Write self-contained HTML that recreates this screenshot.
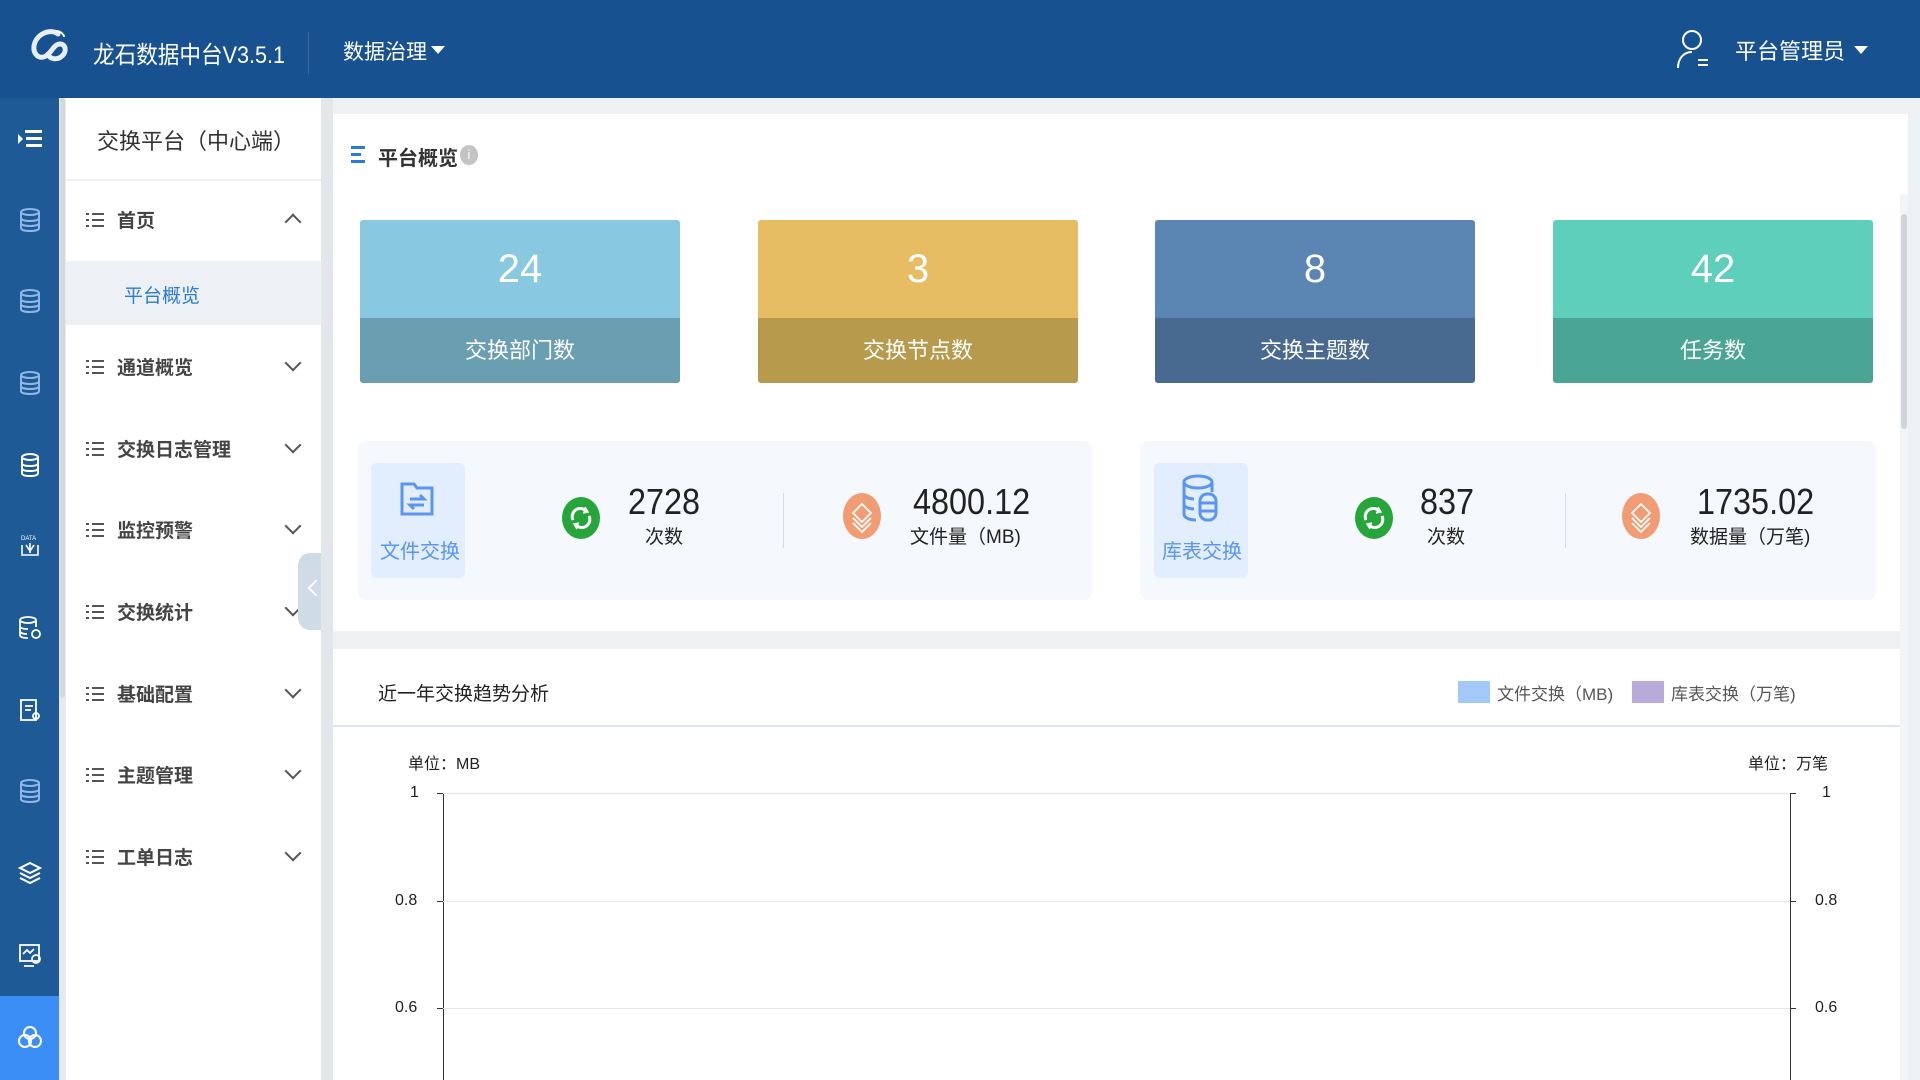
<!DOCTYPE html>
<html><head><meta charset="utf-8"><style>
*{margin:0;padding:0;box-sizing:border-box}
body{width:1920px;height:1080px;overflow:hidden;background:#eef1f4;font-family:"Liberation Sans","Noto Sans CJK SC",sans-serif;position:relative;color:#333}
.abs{position:absolute}
.hdr{left:0;top:0;width:1920px;height:98px;background:#175190;color:#fff}
.bar{left:0;top:98px;width:59px;height:982px;background:#1e5a96}
.bar .ic{position:absolute;left:17px;width:26px;height:26px}
.menu{left:66px;top:98px;width:255px;height:982px;background:#fff}
.mi{position:absolute;left:0;width:255px;height:60px;font-size:19px;color:#444;font-weight:bold}
.mi .l{position:absolute;left:20px;top:22px;width:18px;height:16px}
.mi .t{position:absolute;left:51px;top:16px}
.mi .c{position:absolute;right:22px;top:20px;width:12px;height:12px;border-right:2px solid #555;border-bottom:2px solid #555;transform:rotate(45deg)}
.card{top:220px;width:320px;height:163px;border-radius:3px;overflow:hidden;color:#fff;text-align:center}
.card .n{height:98px;font-size:40px;line-height:98px}
.card .b{height:65px;font-size:22px;line-height:65px}
.box{top:441px;height:159px;background:#f5f8fc;border-radius:8px}
.num{font-size:36px;color:#222;line-height:40px;transform:scaleX(.9);transform-origin:left}
.sub{font-size:19px;color:#222}
</style></head><body>
<div class="abs hdr">
 <svg class="abs" style="left:28px;top:28px" width="44" height="42" viewBox="0 0 44 42"><path d="M30 6c-8-6-22 0-24 12-1 8 5 14 12 10 6-4 8-12 14-12 6 0 7 8 2 12-4 4-12 4-14-2" fill="none" stroke="#e8eef5" stroke-width="5" stroke-linecap="round"/><path d="M28 3c4 0 8 3 8 6" fill="none" stroke="#fff" stroke-width="2"/></svg>
 <div class="abs" style="left:93px;top:35px;font-size:24px;transform:scaleX(.9);transform-origin:left">龙石数据中台V3.5.1</div>
 <div class="abs" style="left:308px;top:32px;width:1px;height:42px;background:#3b6aa3"></div>
 <div class="abs" style="left:343px;top:36px;font-size:21px">数据治理</div>
 <div class="abs" style="left:431px;top:46px;border-left:7px solid transparent;border-right:7px solid transparent;border-top:8px solid #fff"></div>
 <svg class="abs" style="left:1676px;top:28px" width="34" height="42" viewBox="0 0 34 42" fill="none" stroke="#fff" stroke-width="2"><circle cx="16" cy="12" r="9"/><path d="M2 40c0-10 6-16 14-16"/><path d="M22 32h10M22 37h10"/></svg>
 <div class="abs" style="left:1735px;top:34px;font-size:22px">平台管理员</div>
 <div class="abs" style="left:1854px;top:46px;border-left:7px solid transparent;border-right:7px solid transparent;border-top:8px solid #fff"></div>
</div>
<div class="abs bar">
 <svg class="ic" style="top:28px" viewBox="0 0 26 26" fill="#fff"><path d="M1 8l5 5-5 5z"/><rect x="8" y="4" width="17" height="3"/><rect x="9" y="11" width="16" height="3"/><rect x="9" y="18" width="16" height="3"/></svg>
 <svg class="ic" style="top:109px" viewBox="0 0 26 26" fill="none" stroke="#8fb6e6" stroke-width="2"><ellipse cx="13" cy="5" rx="9" ry="3"/><path d="M4 5v16c0 2 4 3 9 3s9-1 9-3V5M4 11c0 2 4 3 9 3s9-1 9-3M4 16c0 2 4 3 9 3s9-1 9-3"/></svg>
 <svg class="ic" style="top:190px" viewBox="0 0 26 26" fill="none" stroke="#8fb6e6" stroke-width="2"><ellipse cx="13" cy="5" rx="9" ry="3"/><path d="M4 5v16c0 2 4 3 9 3s9-1 9-3V5M4 11c0 2 4 3 9 3s9-1 9-3M4 16c0 2 4 3 9 3s9-1 9-3"/></svg>
 <svg class="ic" style="top:272px" viewBox="0 0 26 26" fill="none" stroke="#8fb6e6" stroke-width="2"><ellipse cx="13" cy="5" rx="9" ry="3"/><path d="M4 5v16c0 2 4 3 9 3s9-1 9-3V5M4 11c0 2 4 3 9 3s9-1 9-3M4 16c0 2 4 3 9 3s9-1 9-3"/></svg>
 <svg class="ic" style="top:354px" viewBox="0 0 26 26" fill="none" stroke="#fff" stroke-width="2"><ellipse cx="13" cy="5" rx="8" ry="3"/><path d="M5 5v16c0 2 3 3 8 3s8-1 8-3V5M5 11c0 2 3 3 8 3s8-1 8-3M5 16c0 2 3 3 8 3s8-1 8-3"/></svg>
 <svg class="ic" style="top:435px" viewBox="0 0 26 26" fill="none" stroke="#fff" stroke-width="1.6"><path d="M5 12v10h16V12M9 12l4 6 4-6M13 10v10"/><text x="4" y="7" font-size="6" fill="#fff" stroke="none">DATA</text></svg>
 <svg class="ic" style="top:517px" viewBox="0 0 26 26" fill="none" stroke="#fff" stroke-width="1.8"><ellipse cx="11" cy="5" rx="8" ry="3"/><path d="M3 5v15c0 2 3 3 8 3M19 5v7M3 11c0 2 3 3 8 3M3 16c0 2 3 3 7 3"/><circle cx="19" cy="19" r="4"/></svg>
 <svg class="ic" style="top:599px" viewBox="0 0 26 26" fill="none" stroke="#fff" stroke-width="1.8"><rect x="4" y="3" width="15" height="20"/><path d="M8 9h8M8 13h6"/><circle cx="19" cy="19" r="3"/></svg>
 <svg class="ic" style="top:680px" viewBox="0 0 26 26" fill="none" stroke="#8fb6e6" stroke-width="2"><ellipse cx="13" cy="5" rx="9" ry="3"/><path d="M4 5v16c0 2 4 3 9 3s9-1 9-3V5M4 11c0 2 4 3 9 3s9-1 9-3M4 16c0 2 4 3 9 3s9-1 9-3"/></svg>
 <svg class="ic" style="top:762px" viewBox="0 0 26 26" fill="none" stroke="#fff" stroke-width="2"><path d="M13 3l10 5-10 5-10-5z"/><path d="M3 13l10 5 10-5M3 18l10 5 10-5"/></svg>
 <svg class="ic" style="top:844px" viewBox="0 0 26 26" fill="none" stroke="#fff" stroke-width="1.8"><rect x="3" y="3" width="19" height="16"/><path d="M7 24h10M6 12l4-4 3 3 4-4"/><circle cx="19" cy="17" r="4"/></svg>
 <div class="abs" style="left:0;top:898px;width:59px;height:84px;background:#3a8ef5"></div>
 <svg class="ic" style="top:926px" viewBox="0 0 26 26" fill="none" stroke="#fff" stroke-width="2"><circle cx="13" cy="9" r="6"/><circle cx="8" cy="17" r="6"/><circle cx="18" cy="17" r="6"/></svg>
</div>
<div class="abs" style="left:59px;top:98px;width:7px;height:982px;background:#e6e9ed"></div>
<div class="abs" style="left:60px;top:98px;width:5px;height:600px;background:#d5d9de;border-radius:3px"></div>
<div class="abs menu">
 <div class="abs" style="left:31px;top:26px;font-size:22px;color:#333">交换平台（中心端）</div>
 <div class="abs" style="left:0;top:81px;width:255px;height:2px;background:#eef0f2"></div>
 <div class="mi" style="top:92px"><svg class="l" viewBox="0 0 18 16" fill="#555"><rect x="0" y="1" width="3" height="2"/><rect x="0" y="7" width="3" height="2"/><rect x="0" y="13" width="3" height="2"/><rect x="6" y="1" width="12" height="2"/><rect x="6" y="7" width="12" height="2"/><rect x="6" y="13" width="12" height="2"/></svg><span class="t">首页</span><div class="c" style="transform:rotate(225deg);top:26px"></div></div>
 <div class="abs" style="left:0;top:163px;width:255px;height:64px;background:#edf1f5"></div>
 <div class="abs" style="left:58px;top:183px;font-size:19px;color:#2a7ad8">平台概览</div>
 <div class="mi" style="top:239px"><svg class="l" viewBox="0 0 18 16" fill="#555"><rect x="0" y="1" width="3" height="2"/><rect x="0" y="7" width="3" height="2"/><rect x="0" y="13" width="3" height="2"/><rect x="6" y="1" width="12" height="2"/><rect x="6" y="7" width="12" height="2"/><rect x="6" y="13" width="12" height="2"/></svg><span class="t">通道概览</span><div class="c"></div></div>
 <div class="mi" style="top:321px"><svg class="l" viewBox="0 0 18 16" fill="#555"><rect x="0" y="1" width="3" height="2"/><rect x="0" y="7" width="3" height="2"/><rect x="0" y="13" width="3" height="2"/><rect x="6" y="1" width="12" height="2"/><rect x="6" y="7" width="12" height="2"/><rect x="6" y="13" width="12" height="2"/></svg><span class="t">交换日志管理</span><div class="c"></div></div>
 <div class="mi" style="top:402px"><svg class="l" viewBox="0 0 18 16" fill="#555"><rect x="0" y="1" width="3" height="2"/><rect x="0" y="7" width="3" height="2"/><rect x="0" y="13" width="3" height="2"/><rect x="6" y="1" width="12" height="2"/><rect x="6" y="7" width="12" height="2"/><rect x="6" y="13" width="12" height="2"/></svg><span class="t">监控预警</span><div class="c"></div></div>
 <div class="mi" style="top:484px"><svg class="l" viewBox="0 0 18 16" fill="#555"><rect x="0" y="1" width="3" height="2"/><rect x="0" y="7" width="3" height="2"/><rect x="0" y="13" width="3" height="2"/><rect x="6" y="1" width="12" height="2"/><rect x="6" y="7" width="12" height="2"/><rect x="6" y="13" width="12" height="2"/></svg><span class="t">交换统计</span><div class="c"></div></div>
 <div class="mi" style="top:566px"><svg class="l" viewBox="0 0 18 16" fill="#555"><rect x="0" y="1" width="3" height="2"/><rect x="0" y="7" width="3" height="2"/><rect x="0" y="13" width="3" height="2"/><rect x="6" y="1" width="12" height="2"/><rect x="6" y="7" width="12" height="2"/><rect x="6" y="13" width="12" height="2"/></svg><span class="t">基础配置</span><div class="c"></div></div>
 <div class="mi" style="top:647px"><svg class="l" viewBox="0 0 18 16" fill="#555"><rect x="0" y="1" width="3" height="2"/><rect x="0" y="7" width="3" height="2"/><rect x="0" y="13" width="3" height="2"/><rect x="6" y="1" width="12" height="2"/><rect x="6" y="7" width="12" height="2"/><rect x="6" y="13" width="12" height="2"/></svg><span class="t">主题管理</span><div class="c"></div></div>
 <div class="mi" style="top:729px"><svg class="l" viewBox="0 0 18 16" fill="#555"><rect x="0" y="1" width="3" height="2"/><rect x="0" y="7" width="3" height="2"/><rect x="0" y="13" width="3" height="2"/><rect x="6" y="1" width="12" height="2"/><rect x="6" y="7" width="12" height="2"/><rect x="6" y="13" width="12" height="2"/></svg><span class="t">工单日志</span><div class="c"></div></div>
 <div class="abs" style="left:232px;top:455px;width:23px;height:77px;background:#cfdbe6;border-radius:12px 0 0 12px"></div>
 <div class="abs" style="left:244px;top:484px;width:12px;height:12px;border-left:2px solid #fff;border-bottom:2px solid #fff;transform:rotate(45deg)"></div>
</div>
<div class="abs" style="left:321px;top:98px;width:12px;height:982px;background:#e3e7eb"></div>
<div class="abs" style="left:333px;top:114px;width:1575px;height:80px;background:#fff"></div>
<svg class="abs" style="left:351px;top:146px" width="16" height="18"><rect x="0" y="0" width="14" height="3" fill="#2a7ad8"/><rect x="0" y="7" width="10" height="3" fill="#2a7ad8"/><rect x="0" y="14" width="14" height="3" fill="#2a7ad8"/></svg>
<div class="abs" style="left:378px;top:142px;font-size:20px;color:#333;font-weight:bold">平台概览</div>
<div class="abs" style="left:460px;top:145px;width:18px;height:20px;border-radius:50%;background:#c4c4c4;color:#fff;font-size:13px;text-align:center;line-height:20px">i</div>
<div class="abs" style="left:333px;top:194px;width:1575px;height:437px;background:#fff"></div>
<div class="abs card" style="left:360px"><div class="n" style="background:#88c8e0">24</div><div class="b" style="background:#6a9fb2">交换部门数</div></div>
<div class="abs card" style="left:758px"><div class="n" style="background:#e6bd63">3</div><div class="b" style="background:#b89a4d">交换节点数</div></div>
<div class="abs card" style="left:1155px"><div class="n" style="background:#5b86b4">8</div><div class="b" style="background:#486a91">交换主题数</div></div>
<div class="abs card" style="left:1553px"><div class="n" style="background:#5ecfbb">42</div><div class="b" style="background:#4aa595">任务数</div></div>

<div class="abs box" style="left:358px;width:734px"></div>
<div class="abs" style="left:371px;top:463px;width:94px;height:115px;background:#e2eefd;border-radius:6px"></div>
<svg class="abs" style="left:398px;top:480px" width="38" height="38" viewBox="0 0 38 38" fill="none" stroke="#5a95f0" stroke-width="3"><path d="M4 4h12l3 4h15v26H4z"/><path d="M12 19h14l-4-4M26 25H12l4 4"/></svg>
<div class="abs" style="left:380px;top:535px;font-size:20px;color:#5a95f0">文件交换</div>
<svg class="abs" style="left:561px;top:496px" width="40" height="44" viewBox="0 0 40 44"><ellipse cx="20" cy="22" rx="19" ry="21" fill="#26a63a"/><path d="M12 24a8 8 0 0 1 13-9M28 20a8 8 0 0 1-13 9" fill="none" stroke="#fff" stroke-width="3"/><path d="M24 11l3 5-5 1M16 33l-3-5 5-1" fill="#fff" stroke="#fff" stroke-width="1.5"/></svg>
<div class="abs num" style="left:628px;top:482px">2728</div>
<div class="abs sub" style="left:645px;top:522px">次数</div>
<div class="abs" style="left:783px;top:493px;width:1px;height:55px;background:#d6dce3"></div>
<svg class="abs" style="left:842px;top:492px" width="40" height="48" viewBox="0 0 40 48"><ellipse cx="20" cy="24" rx="19" ry="23" fill="#f29c74"/><path d="M20 12l9 9-9 9-9-9z M11 26l9 9 9-9 M11 31l9 9 9-9" fill="none" stroke="#fff" stroke-width="1.8"/></svg>
<div class="abs num" style="left:913px;top:482px">4800.12</div>
<div class="abs sub" style="left:910px;top:522px">文件量（MB)</div>

<div class="abs box" style="left:1140px;width:736px"></div>
<div class="abs" style="left:1154px;top:463px;width:94px;height:115px;background:#e2eefd;border-radius:6px"></div>
<svg class="abs" style="left:1180px;top:474px" width="40" height="52" viewBox="0 0 40 52" fill="none" stroke="#5a95f0" stroke-width="3"><ellipse cx="18" cy="8" rx="14" ry="6"/><path d="M4 8v32c0 4 6 6 12 6M32 8v10M4 20c0 3 5 5 10 5M4 30c0 3 5 5 10 5"/><rect x="20" y="20" width="16" height="26" rx="7"/><path d="M20 29h16M20 37h16"/></svg>
<div class="abs" style="left:1162px;top:535px;font-size:20px;color:#5a95f0">库表交换</div>
<svg class="abs" style="left:1354px;top:496px" width="40" height="44" viewBox="0 0 40 44"><ellipse cx="20" cy="22" rx="19" ry="21" fill="#26a63a"/><path d="M12 24a8 8 0 0 1 13-9M28 20a8 8 0 0 1-13 9" fill="none" stroke="#fff" stroke-width="3"/><path d="M24 11l3 5-5 1M16 33l-3-5 5-1" fill="#fff" stroke="#fff" stroke-width="1.5"/></svg>
<div class="abs num" style="left:1420px;top:482px">837</div>
<div class="abs sub" style="left:1427px;top:522px">次数</div>
<div class="abs" style="left:1565px;top:493px;width:1px;height:55px;background:#d6dce3"></div>
<svg class="abs" style="left:1621px;top:492px" width="40" height="48" viewBox="0 0 40 48"><ellipse cx="20" cy="24" rx="19" ry="23" fill="#f29c74"/><path d="M20 12l9 9-9 9-9-9z M11 26l9 9 9-9 M11 31l9 9 9-9" fill="none" stroke="#fff" stroke-width="1.8"/></svg>
<div class="abs num" style="left:1697px;top:482px">1735.02</div>
<div class="abs sub" style="left:1690px;top:522px">数据量（万笔)</div>

<div class="abs" style="left:333px;top:649px;width:1567px;height:431px;background:#fff"></div>
<div class="abs" style="left:378px;top:679px;font-size:19px;color:#222">近一年交换趋势分析</div>
<div class="abs" style="left:1458px;top:681px;width:32px;height:22px;background:#a4c8f8"></div>
<div class="abs" style="left:1497px;top:680px;font-size:17px;color:#555">文件交换（MB)</div>
<div class="abs" style="left:1632px;top:681px;width:32px;height:22px;background:#b8aad9"></div>
<div class="abs" style="left:1671px;top:680px;font-size:17px;color:#555">库表交换（万笔)</div>
<div class="abs" style="left:333px;top:725px;width:1567px;height:2px;background:#dde6ef"></div>
<div class="abs" style="left:408px;top:750px;font-size:16px;color:#222">单位：MB</div>
<div class="abs" style="left:1748px;top:750px;font-size:16px;color:#222">单位：万笔</div>
<div class="abs" style="left:443px;top:793px;width:1px;height:287px;background:#333"></div>
<div class="abs" style="left:1790px;top:793px;width:1px;height:287px;background:#333"></div>
<div class="abs" style="left:443px;top:793px;width:1347px;height:1px;background:#e6e6e6"></div>
<div class="abs" style="left:443px;top:901px;width:1347px;height:1px;background:#e6e6e6"></div>
<div class="abs" style="left:443px;top:1008px;width:1347px;height:1px;background:#e6e6e6"></div>
<div class="abs" style="left:437px;top:793px;width:6px;height:1px;background:#333"></div>
<div class="abs" style="left:437px;top:901px;width:6px;height:1px;background:#333"></div>
<div class="abs" style="left:437px;top:1008px;width:6px;height:1px;background:#333"></div>
<div class="abs" style="left:1790px;top:793px;width:6px;height:1px;background:#333"></div>
<div class="abs" style="left:1790px;top:901px;width:6px;height:1px;background:#333"></div>
<div class="abs" style="left:1790px;top:1008px;width:6px;height:1px;background:#333"></div>
<div class="abs" style="left:410px;top:784px;font-size:16px;color:#222">1</div>
<div class="abs" style="left:395px;top:892px;font-size:16px;color:#222">0.8</div>
<div class="abs" style="left:395px;top:999px;font-size:16px;color:#222">0.6</div>
<div class="abs" style="left:1822px;top:784px;font-size:16px;color:#222">1</div>
<div class="abs" style="left:1815px;top:892px;font-size:16px;color:#222">0.8</div>
<div class="abs" style="left:1815px;top:999px;font-size:16px;color:#222">0.6</div>
<div class="abs" style="left:1900px;top:194px;width:8px;height:886px;background:#f3f4f6"></div>
<div class="abs" style="left:1901px;top:214px;width:6px;height:215px;background:#d0d4d9;border-radius:3px"></div>
</body></html>
